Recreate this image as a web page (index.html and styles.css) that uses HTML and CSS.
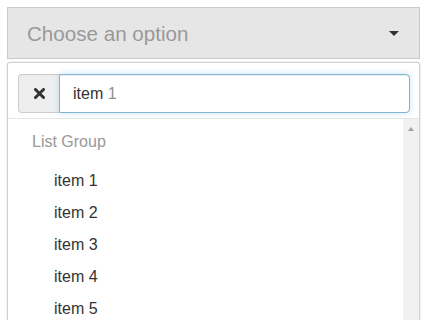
FILE: index.html
```html
<!DOCTYPE html>
<html>
<head>
<meta charset="utf-8">
<link rel="stylesheet" href="styles.css">
</head>
<body>
<div class="select">
  <span class="placeholder">Choose an option</span>
  <span class="caret"></span>
</div>
<div class="dropdown">
  <div class="search-row">
    <button class="clear" type="button" aria-label="Clear">
      <svg width="11" height="11" viewBox="0 0 11 11"><path d="M1.5 1.5 L9.5 9.5 M9.5 1.5 L1.5 9.5" stroke="#333" stroke-width="3" stroke-linecap="round"/></svg>
    </button>
    <div class="search-input">item <span class="typed">1</span></div>
  </div>
  <div class="results">
    <div class="list">
      <div class="group-label">List Group</div>
      <div class="item">item 1</div>
      <div class="item">item 2</div>
      <div class="item">item 3</div>
      <div class="item">item 4</div>
      <div class="item">item 5</div>
    </div>
    <div class="scrollbar"><span class="arrow-up"></span></div>
  </div>
</div>
</body>
</html>
```
FILE: styles.css
```css
html, body {
  margin: 0;
  padding: 0;
  background: #ffffff;
  overflow: hidden;
}
body {
  padding: 7px;
  font-family: "Liberation Sans", Arial, sans-serif;
  height: 320px;
  box-sizing: border-box;
}
.select {
  width: 413px;
  height: 52px;
  box-sizing: border-box;
  background: #e6e6e6;
  border: 1px solid #c9c9c9;
  display: flex;
  align-items: center;
  justify-content: space-between;
  padding: 1px 19px 0 19px;
}
.placeholder {
  font-size: 20.6px;
  color: #999999;
  line-height: 24px;
}
.caret {
  width: 0;
  height: 0;
  border-left: 5px solid transparent;
  border-right: 5px solid transparent;
  border-top: 5px solid #333;
  margin-right: 1px;
}
.dropdown {
  margin-top: 3px;
  width: 413px;
  height: 260px;
  box-sizing: border-box;
  border: 1px solid #d0d0d0;
  border-bottom: none;
  border-radius: 3px 3px 0 0;
  box-shadow: 0 0 3px rgba(0, 0, 0, 0.12);
  display: flex;
  flex-direction: column;
}
.search-row {
  display: flex;
  padding: 11px 9px 5px 10px;
  border-bottom: 1px solid #e5e5e5;
}
.clear {
  width: 41px;
  height: 39px;
  box-sizing: border-box;
  margin: 0;
  padding: 0;
  background: #eeeeee;
  border: 1px solid #cccccc;
  border-right: none;
  border-radius: 4px 0 0 4px;
  display: flex;
  align-items: center;
  justify-content: center;
}
.search-input {
  flex: 1;
  height: 39px;
  box-sizing: border-box;
  border: 1px solid #7fb3cf;
  border-radius: 0 4px 4px 0;
  box-shadow: inset 0 1px 1px rgba(0, 0, 0, 0.075), 0 0 6px rgba(102, 175, 233, 0.35);
  padding: 0 13px;
  font-size: 16px;
  line-height: 38px;
  color: #333333;
  background: #ffffff;
}
.typed {
  color: #8a948a;
}
.results {
  flex: 1;
  display: flex;
  min-height: 0;
}
.list {
  flex: 1;
  font-size: 16px;
}
.group-label {
  color: #999999;
  line-height: 20px;
  padding: 13px 0 13px 24px;
}
.item {
  color: #333333;
  line-height: 32px;
  padding-left: 46px;
}
.scrollbar {
  width: 16px;
  background: #f1f1f1;
  display: flex;
  justify-content: center;
  padding-top: 8px;
  box-sizing: border-box;
}
.arrow-up {
  width: 0;
  height: 0;
  border-left: 3.5px solid transparent;
  border-right: 3.5px solid transparent;
  border-bottom: 4px solid #a3a3a3;
}
```
